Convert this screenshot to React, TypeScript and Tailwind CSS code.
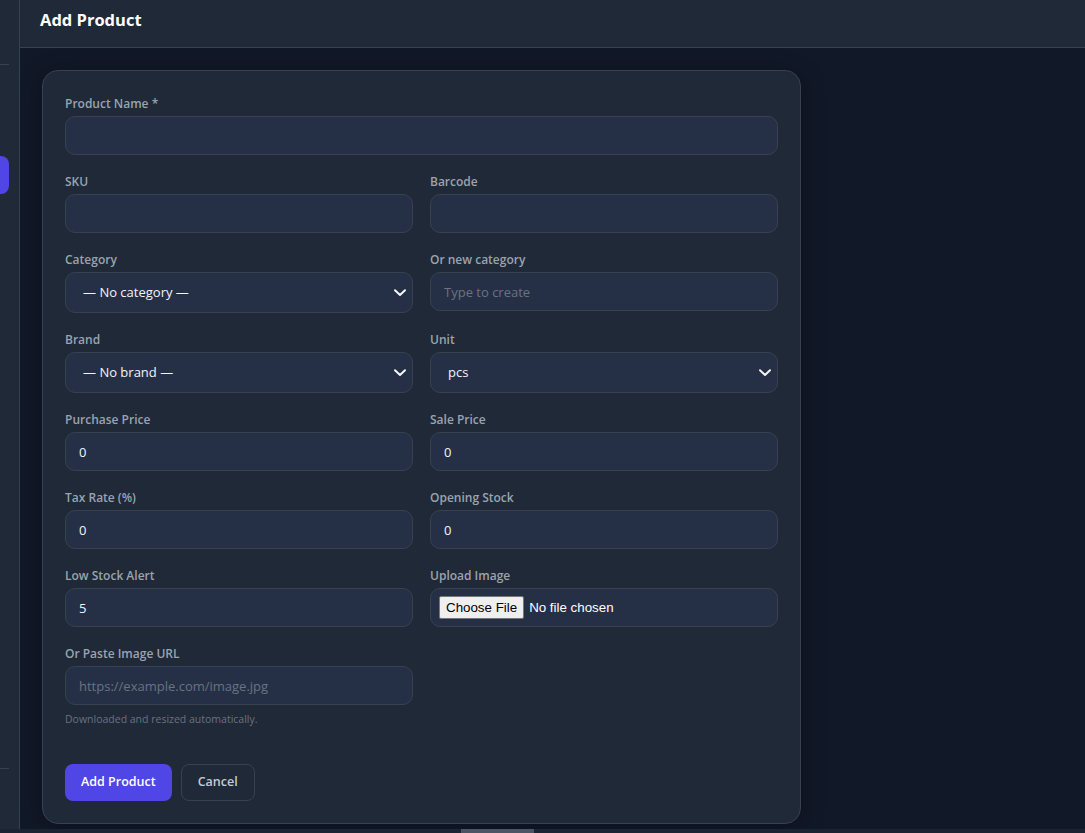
import React from 'react';

const font = "font-['Segoe_UI','Open_Sans',sans-serif]";

function Label({ children }: { children: React.ReactNode }) {
  return <label className="block pt-px text-[12px] leading-5 font-semibold text-[#9ca3af] mb-[2px]">{children}</label>;
}

const inputCls =
  'block w-full h-[39px] px-[13px] rounded-[10px] border border-[#374151] bg-[#253047] text-[13px] text-[#f3f4f6] placeholder:text-[#6b7280] outline-none';

function TextField({ label, value, placeholder, span }: { label: string; value?: string; placeholder?: string; span?: boolean }) {
  return (
    <div className={span ? 'col-span-2' : ''}>
      <Label>{label}</Label>
      <input className={inputCls} defaultValue={value} placeholder={placeholder} />
    </div>
  );
}

function SelectField({ label, options }: { label: string; options: string[] }) {
  return (
    <div>
      <Label>{label}</Label>
      <div className="relative">
        <select className="block w-full h-[41px] pl-[17px] pr-10 appearance-none rounded-[10px] border border-[#374151] bg-[#253047] text-[13px] text-[#f3f4f6] outline-none">
          {options.map((o) => (
            <option key={o}>{o}</option>
          ))}
        </select>
        <svg className="absolute right-[7px] top-[17px] pointer-events-none" width="12" height="8" viewBox="0 0 12 8" fill="none">
          <polyline points="1,1.2 6,6 11,1.2" stroke="#f3f4f6" strokeWidth="2" strokeLinecap="round" strokeLinejoin="round" />
        </svg>
      </div>
    </div>
  );
}

export default function App() {
  return (
    <div className={`${font} h-[833px] w-[1085px] flex flex-col bg-[#111827] overflow-hidden`}>
      <div className="flex flex-1 min-h-0">
        {/* sidebar, mostly off-screen */}
        <aside className="w-5 shrink-0 bg-[#1f2937] border-r border-[#374151] flex flex-col">
          <div className="mt-[64px] h-px w-[9px] bg-[#374151]" />
          <div className="mt-[91px] h-[38px] w-[9px] rounded-r-lg bg-[#4f46e5]" />
          <div className="mt-auto mb-[60px] h-px w-[9px] bg-[#374151]" />
        </aside>

        <div className="flex-1 flex flex-col min-w-0">
          <header className="h-[48px] shrink-0 bg-[#1f2937] border-b border-[#374151] px-5 pt-[8px]">
            <h1 className="text-[16.5px] leading-6 font-bold text-white">Add Product</h1>
          </header>

          <main className="flex-1 p-[22px]">
            <div className="w-[759px] rounded-2xl border border-[#374151] bg-[#1f2937] p-[22px] shadow-[0_4px_24px_rgba(0,0,0,0.3)]">
              <div className="grid grid-cols-2 gap-x-[17px] gap-y-4">
                <TextField label="Product Name *" span />
                <TextField label="SKU" />
                <TextField label="Barcode" />
                <SelectField label="Category" options={['— No category —']} />
                <TextField label="Or new category" placeholder="Type to create" />
                <SelectField label="Brand" options={['— No brand —']} />
                <SelectField label="Unit" options={['pcs']} />
                <TextField label="Purchase Price" value="0" />
                <TextField label="Sale Price" value="0" />
                <TextField label="Tax Rate (%)" value="0" />
                <TextField label="Opening Stock" value="0" />
                <TextField label="Low Stock Alert" value="5" />
                <div>
                  <Label>Upload Image</Label>
                  <div className="flex items-center h-[39px] px-2 rounded-[10px] border border-[#374151] bg-[#253047]">
                    <input
                      type="file"
                      className="font-['Liberation_Sans',Arial,sans-serif] text-[13.33px] text-white file:mr-[5px] file:px-[6px] file:py-px file:border file:border-[#767676] file:rounded-[2px] file:bg-[#efefef] file:text-black"
                    />
                  </div>
                </div>
                <div>
                  <Label>Or Paste Image URL</Label>
                  <input className={inputCls} placeholder="https://example.com/image.jpg" />
                  <p className="mt-[6px] text-[10.5px] leading-4 text-[#6b7280]">Downloaded and resized automatically.</p>
                </div>
              </div>

              <div className="mt-[37px] flex gap-[9px]">
                <button className="h-[37px] px-4 rounded-lg bg-[#4f46e5] text-[12.5px] font-semibold text-white">Add Product</button>
                <button className="h-[37px] px-4 rounded-lg border border-[#374151] text-[12.5px] font-semibold text-[#c5cbd5]">Cancel</button>
              </div>
            </div>
          </main>
        </div>
      </div>
      <div className="h-1 shrink-0 bg-[#1b2432] relative">
        <div className="absolute left-[461px] top-0 h-1 w-[73px] bg-[#4b5563]" />
      </div>
    </div>
  );
}
